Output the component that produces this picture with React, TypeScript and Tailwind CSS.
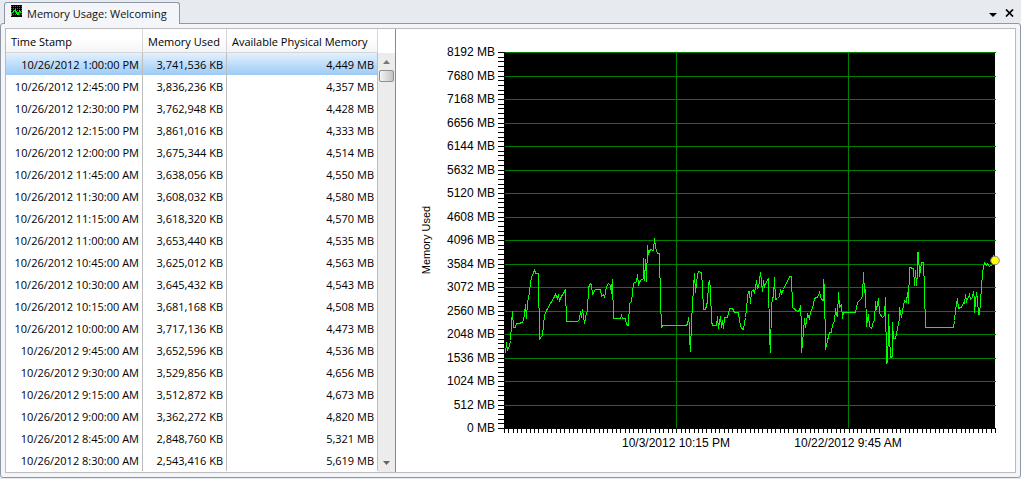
import React, { useState } from "react";

type MemoryRow = {
  time: string;
  used: string;
  available: string;
};

const rows: MemoryRow[] = [
  { time: "10/26/2012 1:00:00 PM", used: "3,741,536 KB", available: "4,449 MB" },
  { time: "10/26/2012 12:45:00 PM", used: "3,836,236 KB", available: "4,357 MB" },
  { time: "10/26/2012 12:30:00 PM", used: "3,762,948 KB", available: "4,428 MB" },
  { time: "10/26/2012 12:15:00 PM", used: "3,861,016 KB", available: "4,333 MB" },
  { time: "10/26/2012 12:00:00 PM", used: "3,675,344 KB", available: "4,514 MB" },
  { time: "10/26/2012 11:45:00 AM", used: "3,638,056 KB", available: "4,550 MB" },
  { time: "10/26/2012 11:30:00 AM", used: "3,608,032 KB", available: "4,580 MB" },
  { time: "10/26/2012 11:15:00 AM", used: "3,618,320 KB", available: "4,570 MB" },
  { time: "10/26/2012 11:00:00 AM", used: "3,653,440 KB", available: "4,535 MB" },
  { time: "10/26/2012 10:45:00 AM", used: "3,625,012 KB", available: "4,563 MB" },
  { time: "10/26/2012 10:30:00 AM", used: "3,645,432 KB", available: "4,543 MB" },
  { time: "10/26/2012 10:15:00 AM", used: "3,681,168 KB", available: "4,508 MB" },
  { time: "10/26/2012 10:00:00 AM", used: "3,717,136 KB", available: "4,473 MB" },
  { time: "10/26/2012 9:45:00 AM", used: "3,652,596 KB", available: "4,536 MB" },
  { time: "10/26/2012 9:30:00 AM", used: "3,529,856 KB", available: "4,656 MB" },
  { time: "10/26/2012 9:15:00 AM", used: "3,512,872 KB", available: "4,673 MB" },
  { time: "10/26/2012 9:00:00 AM", used: "3,362,272 KB", available: "4,820 MB" },
  { time: "10/26/2012 8:45:00 AM", used: "2,848,760 KB", available: "5,321 MB" },
  { time: "10/26/2012 8:30:00 AM", used: "2,543,416 KB", available: "5,619 MB" },
];

// plot area inside the chart's viewBox
const plot = { left: 505, right: 995, top: 52, bottom: 428 };

const usage = `505,353 506,342 507,350 509,345 510,340 511,323 512,311 513,327 515,327 516,323 519,323 523,321
525,304 526,318 527,301 528,298 530,283 531,276 533,273 534,269 535,273 538,273 539,339 541,336 542,335
544,315 546,310 550,303 553,298 555,294 557,298 558,294 559,300 562,294 563,293 565,289 566,321 577,321
579,319 580,311 581,317 582,309 584,323 586,312 587,311 588,287 590,283 591,284 592,294 595,289 600,289
601,296 603,294 604,297 606,286 608,283 610,285 611,293 611,284 612,299 612,279 613,318 620,318 621,315
622,318 625,318 626,324 628,325 629,303 631,301 633,283 636,281 637,274 638,284 640,280 643,278 643,258
644,280 645,259 646,281 647,245 648,253 650,249 653,250 654,238 655,247 657,253 659,253 660,300 661,327
662,325 685,325 687,324 688,317 689,325 689,337 690,351 691,321 692,305 693,286 694,273 695,292 697,274
698,271 701,272 702,287 703,309 705,309 707,301 708,284 709,280 710,288 711,321 712,325 716,325 717,316
718,328 720,316 721,327 722,320 723,328 724,317 727,317 729,308 732,308 734,312 738,312 739,321 741,328
743,329 745,317 746,308 747,297 748,291 749,291 750,303 751,291 753,289 754,293 756,280 757,288 758,287
760,272 762,291 763,280 764,286 767,279 768,278 769,337 770,352 771,306 772,297 773,297 774,277 775,299
777,298 779,296 780,289 781,293 783,289 785,284 787,281 789,276 791,276 792,307 797,311 799,310 800,305
801,325 801,352 802,343 804,318 805,327 807,314 809,318 810,311 812,308 814,298 818,296 819,292 821,299
823,300 823,279 824,287 825,349 827,340 829,332 831,332 832,324 834,321 835,308 836,314 837,316 838,292
839,307 841,304 842,318 843,312 855,312 857,302 860,299 862,296 863,272 864,292 865,289 866,326 868,314
869,326 871,328 873,321 874,320 875,301 876,309 878,298 879,313 882,317 884,315 885,297 886,363 887,362
888,330 888,314 890,357 892,356 892,322 893,338 895,338 897,328 899,318 899,307 901,317 902,310 904,300
906,302 907,292 908,303 909,267 913,268 914,285 915,270 916,285 917,273 917,252 918,252 919,276 921,262
923,262 924,289 925,327 953,327 954,320 955,310 957,298 958,308 962,306 963,302 964,303 965,294 966,301
969,294 970,299 972,297 973,291 974,300 974,312 976,292 977,298 978,314 979,314 981,287 982,272 983,267
984,262 986,265 987,263 989,266 992,264 993,255 995,260`;

const yLabels = Array.from({ length: 17 }, (_, i) => i * 512);
const xLabels = [
  { x: 676, text: "10/3/2012 10:15 PM" },
  { x: 848, text: "10/22/2012 9:45 AM" },
];

const X_TICKS = 114;
const Y_TICKS = 80;

function MemoryIcon() {
  return (
    <svg
      width="11"
      height="12"
      viewBox="0 0 11 12"
      shapeRendering="crispEdges"
      aria-hidden="true"
      className="mt-[2px] self-start"
    >
      <rect width="11" height="12" fill="#000" />
      <path d="M0 1.5h11M0 3.5h11M0 5.5h11M0 7.5h11M0 9.5h11" stroke="#00a000" strokeDasharray="1 1" />
      <path d="M0.5 11V8.5L2.5 6.5L4.5 4.5L5.5 8.5L7.5 9.5L8.5 5.5L10.5 8.5" fill="none" stroke="#00ff00" />
    </svg>
  );
}

function Tab() {
  return (
    <div className="relative z-10 -mb-px ml-1 flex h-[22px] items-center gap-[5px] rounded-t-[3px] border border-b-0 border-[#8e97a5] bg-[#f3f5f9] pr-3 pl-[6px]">
      <MemoryIcon />
      <h1 className="text-[11px] leading-4 font-normal whitespace-nowrap text-[#111]">Memory Usage: Welcoming</h1>
    </div>
  );
}

function MemoryTable() {
  const [selected, setSelected] = useState(0);

  return (
    <table className="w-[372px] table-fixed border-separate border-spacing-0 self-start text-[11px] leading-4 text-black">
      <colgroup>
        <col className="w-[137px]" />
        <col className="w-[84px]" />
        <col className="w-[151px]" />
      </colgroup>
      <thead>
        <tr className="h-6 bg-linear-to-b from-white from-40% to-[#f3f4f6]">
          {["Time Stamp", "Memory Used", "Available Physical Memory"].map((title) => (
            <th
              key={title}
              scope="col"
              className="border-r border-b border-[#d5d5d5] px-[5px] pt-[2px] pb-0 text-left font-normal whitespace-nowrap"
            >
              {title}
            </th>
          ))}
        </tr>
      </thead>
      <tbody>
        {rows.map((row, i) => (
          <tr
            key={row.time}
            onClick={() => setSelected(i)}
            className={i === selected ? "h-[22px] bg-linear-to-b from-[#e3f1fd] to-[#9ccaf5]" : "h-[22px]"}
          >
            <td className="border-r border-[#bdbdbd] px-[3px] pt-[2px] pb-0 text-right whitespace-nowrap">{row.time}</td>
            <td className="border-r border-[#bdbdbd] px-[3px] pt-[2px] pb-0 text-right whitespace-nowrap">{row.used}</td>
            <td className="border-r border-[#bdbdbd] px-[3px] pt-[2px] pb-0 text-right whitespace-nowrap">
              {row.available}
            </td>
          </tr>
        ))}
      </tbody>
    </table>
  );
}

function ScrollBar() {
  return (
    <div className="flex w-[17px] flex-col pt-6">
      <div className="flex flex-1 flex-col items-center bg-[#ececec]">
        <button type="button" aria-label="Scroll up" className="flex h-[17px] w-full items-center justify-center">
          <svg width="7" height="4" viewBox="0 0 7 4">
            <path d="M0 4L3.5 0L7 4z" fill="#777" />
          </svg>
        </button>
        <div className="h-3 w-[15px] rounded-xs border border-[#8e8e8e] bg-linear-to-r from-[#f4f4f4] to-[#c4c4c8]" />
        <button
          type="button"
          aria-label="Scroll down"
          className="mt-auto flex h-[18px] w-full items-center justify-center"
        >
          <svg width="7" height="4" viewBox="0 0 7 4">
            <path d="M0 0L3.5 4L7 0z" fill="#666" />
          </svg>
        </button>
      </div>
    </div>
  );
}

function MemoryChart() {
  const { left, right, top, bottom } = plot;
  const yOf = (mb: number) => Math.round(bottom - (mb / 8192) * (bottom - top));

  return (
    <svg
      viewBox="396 29 619 443"
      className="block h-auto w-full font-['Liberation_Sans',Arial,sans-serif] text-xs"
      role="img"
      aria-label="Memory used over time"
    >
      <g shapeRendering="crispEdges">
        <rect x={left - 1} y={top} width={right - left + 1} height={bottom - top + 1} fill="#000" />
        {yLabels.map((mb) =>
          mb > 0 ? <rect key={mb} x={left} y={yOf(mb)} width={right - left + 1} height="1" fill="#008000" /> : null
        )}
        {xLabels.map(({ x }) => (
          <rect key={x} x={x} y={top} width="1" height={bottom - top} fill="#008000" />
        ))}
        {Array.from({ length: Y_TICKS + 1 }, (_, i) => (
          <rect key={i} x={left - 7} y={Math.round(top + (i * (bottom - top)) / Y_TICKS)} width="6" height="1" />
        ))}
        {Array.from({ length: X_TICKS + 1 }, (_, i) => (
          <rect key={i} x={Math.round(left - 1 + (i * (right - left + 1)) / X_TICKS)} y={bottom} width="1" height="5" />
        ))}
        <polyline points={usage} fill="none" stroke="#00ff00" transform="translate(0.5 0.5)" />
      </g>
      <circle cx="995" cy="260.5" r="4.3" fill="#ffff00" stroke="#808080" />
      {yLabels.map((mb) => (
        <text key={mb} x="495" y={yOf(mb) + 4} textAnchor="end">
          {mb} MB
        </text>
      ))}
      {xLabels.map(({ x, text }) => (
        <text key={text} x={x} y="447" textAnchor="middle">
          {text}
        </text>
      ))}
      <text transform="translate(430 240) rotate(-90)" textAnchor="middle" className="text-[11px]">
        Memory Used
      </text>
    </svg>
  );
}

export default function App() {
  return (
    <main className="flex min-h-screen flex-col bg-[#e7ebf0] pb-px font-['Open_Sans','Noto_Sans',sans-serif]">
      <header className="flex items-end justify-between pt-[2px]">
        <Tab />
        <div className="flex items-center gap-2 pr-[7px]">
          <button type="button" aria-label="Window list" className="flex h-5 items-center pt-1">
            <svg width="8" height="4" viewBox="0 0 8 4">
              <path d="M0 0h8L4 4z" fill="#000" />
            </svg>
          </button>
          <button type="button" aria-label="Close" className="flex h-5 items-center">
            <svg width="9" height="8" viewBox="0 0 9 8">
              <path d="M1 0.5L8 7.5M8 0.5L1 7.5" stroke="#000" strokeWidth="1.7" />
            </svg>
          </button>
        </div>
      </header>

      <section className="flex flex-1 rounded-[3px] border border-[#8e97a5] bg-[#f3f5f9] p-1">
        <div className="flex flex-1 border border-[#bcbcbe] bg-white">
          <div className="flex shrink-0 border-r border-[#6f8fb3]">
            <MemoryTable />
            <ScrollBar />
          </div>
          <div className="min-w-0 flex-1">
            <MemoryChart />
          </div>
        </div>
      </section>
    </main>
  );
}
